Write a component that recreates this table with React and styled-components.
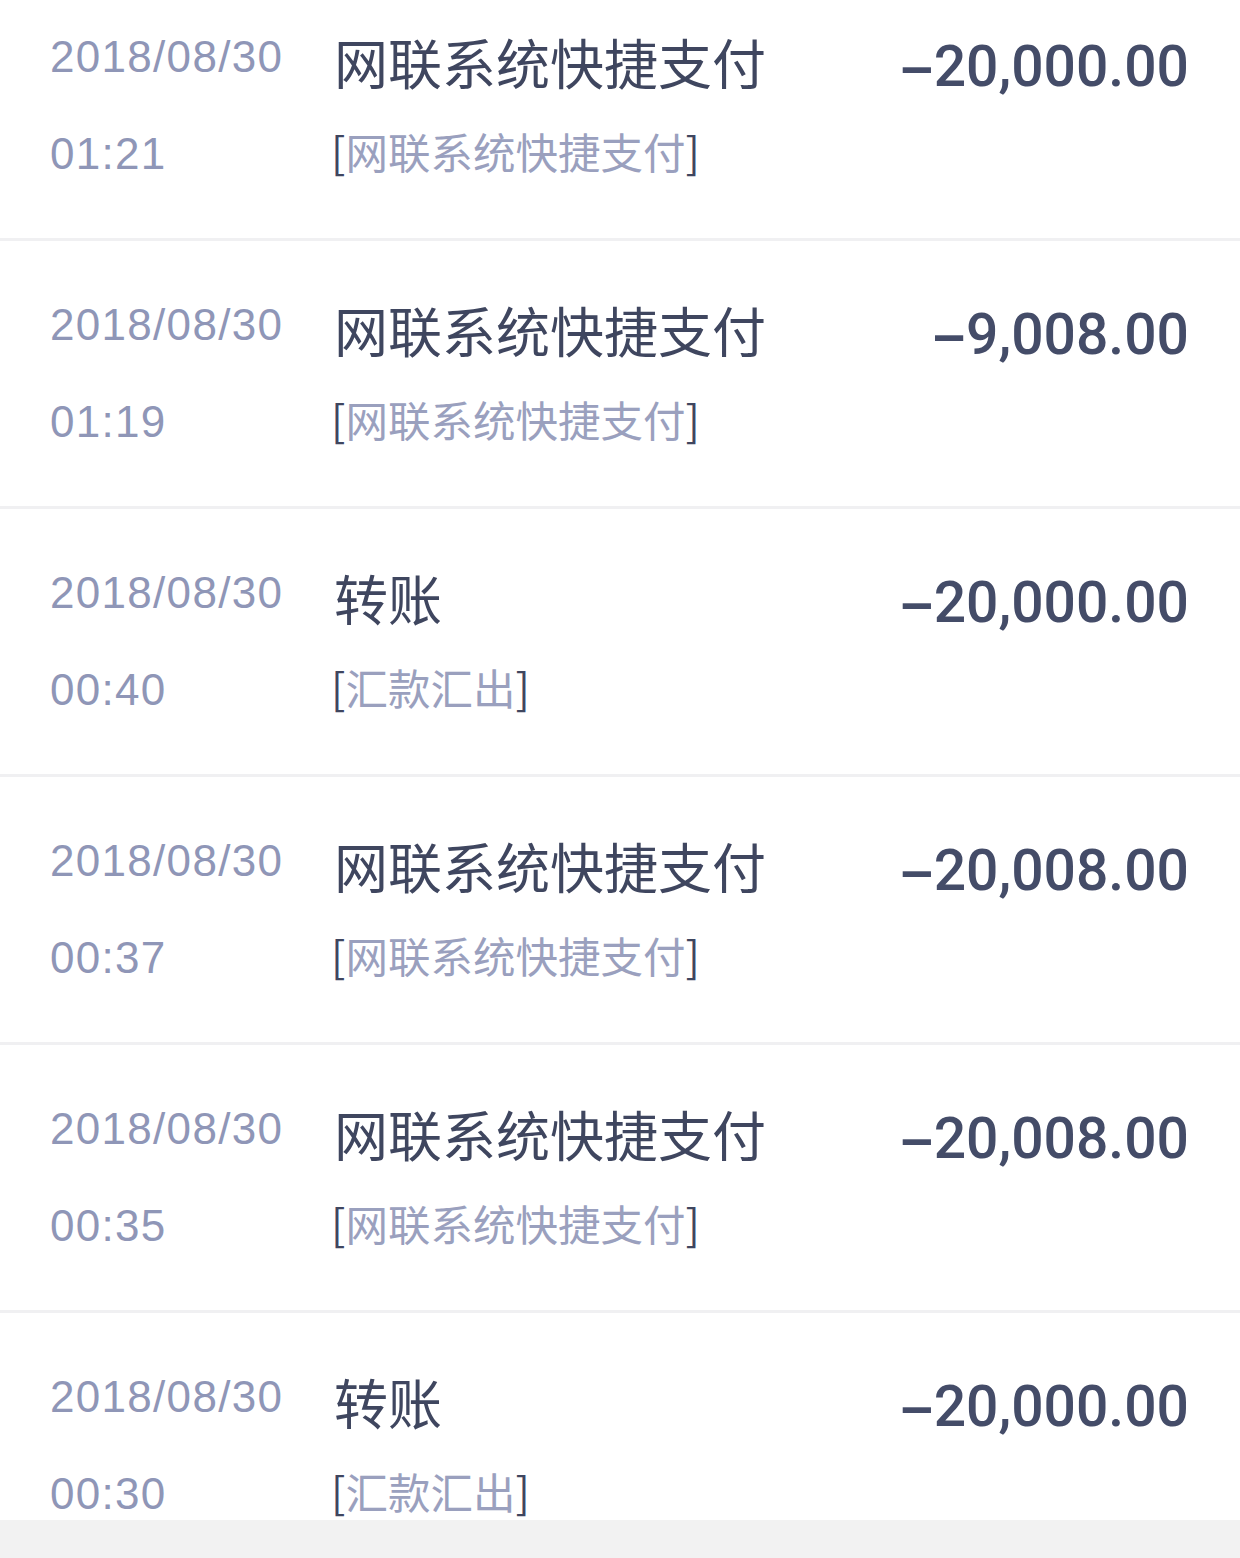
import React from 'react';
import styled, { createGlobalStyle } from 'styled-components';

const latin = '"Liberation Sans", "Noto Sans CJK SC", sans-serif';
const cjk = '"Noto Sans CJK SC", "Liberation Sans", sans-serif';

const GlobalStyle = createGlobalStyle`
  html, body {
    margin: 0;
    padding: 0;
    background: #ffffff;
  }
`;

const Page = styled.div`
  display: flex;
  flex-direction: column;
  height: 1558px;
  overflow: hidden;
`;

const List = styled.div`
  flex: 1;
  overflow: hidden;
`;

const Scroller = styled.div`
  margin-top: -27px;
`;

const Row = styled.div`
  display: grid;
  grid-template-columns: 284px 1fr auto;
  grid-template-rows: 97px auto;
  align-items: start;
  height: 268px;
  box-sizing: border-box;
  padding: 62px 51px 0 50px;
  border-bottom: 3px solid #f0f0f2;
`;

const DateText = styled.div`
  font-family: ${latin};
  font-size: 44px;
  line-height: 44px;
  letter-spacing: 1.3px;
  color: #8f96b7;
`;

const Title = styled.div`
  font-family: ${cjk};
  font-size: 54px;
  line-height: 54px;
  color: #3f465f;
`;

const Amount = styled.div`
  font-family: Roboto, "Liberation Sans", sans-serif;
  font-size: 57px;
  line-height: 57px;
  font-weight: 500;
  color: #444c68;
  text-align: right;
  margin-top: 3px;
`;

const Dash = styled.span`
  font-family: "Liberation Sans", sans-serif;
  font-weight: 700;
  margin-right: 1px;
`;

const Sub = styled.div`
  font-family: ${cjk};
  font-size: 42.5px;
  line-height: 42px;
  color: #9aa0be;
  grid-column: 2 / 4;
  margin: -2px 0 0 -3px;
`;

const Bracket = styled.span`
  color: #3f465f;
`;

const Footer = styled.div`
  height: 38px;
  flex: none;
  background: #f2f2f2;
`;

const items = [
  { date: '2018/08/30', time: '01:21', title: '网联系统快捷支付', sub: '网联系统快捷支付', amount: '20,000.00' },
  { date: '2018/08/30', time: '01:19', title: '网联系统快捷支付', sub: '网联系统快捷支付', amount: '9,008.00' },
  { date: '2018/08/30', time: '00:40', title: '转账', sub: '汇款汇出', amount: '20,000.00' },
  { date: '2018/08/30', time: '00:37', title: '网联系统快捷支付', sub: '网联系统快捷支付', amount: '20,008.00' },
  { date: '2018/08/30', time: '00:35', title: '网联系统快捷支付', sub: '网联系统快捷支付', amount: '20,008.00' },
  { date: '2018/08/30', time: '00:30', title: '转账', sub: '汇款汇出', amount: '20,000.00' },
];

export default function App() {
  return (
    <Page>
      <GlobalStyle />
      <List>
        <Scroller>
          {items.map((it, i) => (
            <Row key={i}>
              <DateText>{it.date}</DateText>
              <Title>{it.title}</Title>
              <Amount>
                <Dash>–</Dash>
                {it.amount}
              </Amount>
              <DateText>{it.time}</DateText>
              <Sub>
                <Bracket>[</Bracket>
                {it.sub}
                <Bracket>]</Bracket>
              </Sub>
            </Row>
          ))}
        </Scroller>
      </List>
      <Footer />
    </Page>
  );
}
